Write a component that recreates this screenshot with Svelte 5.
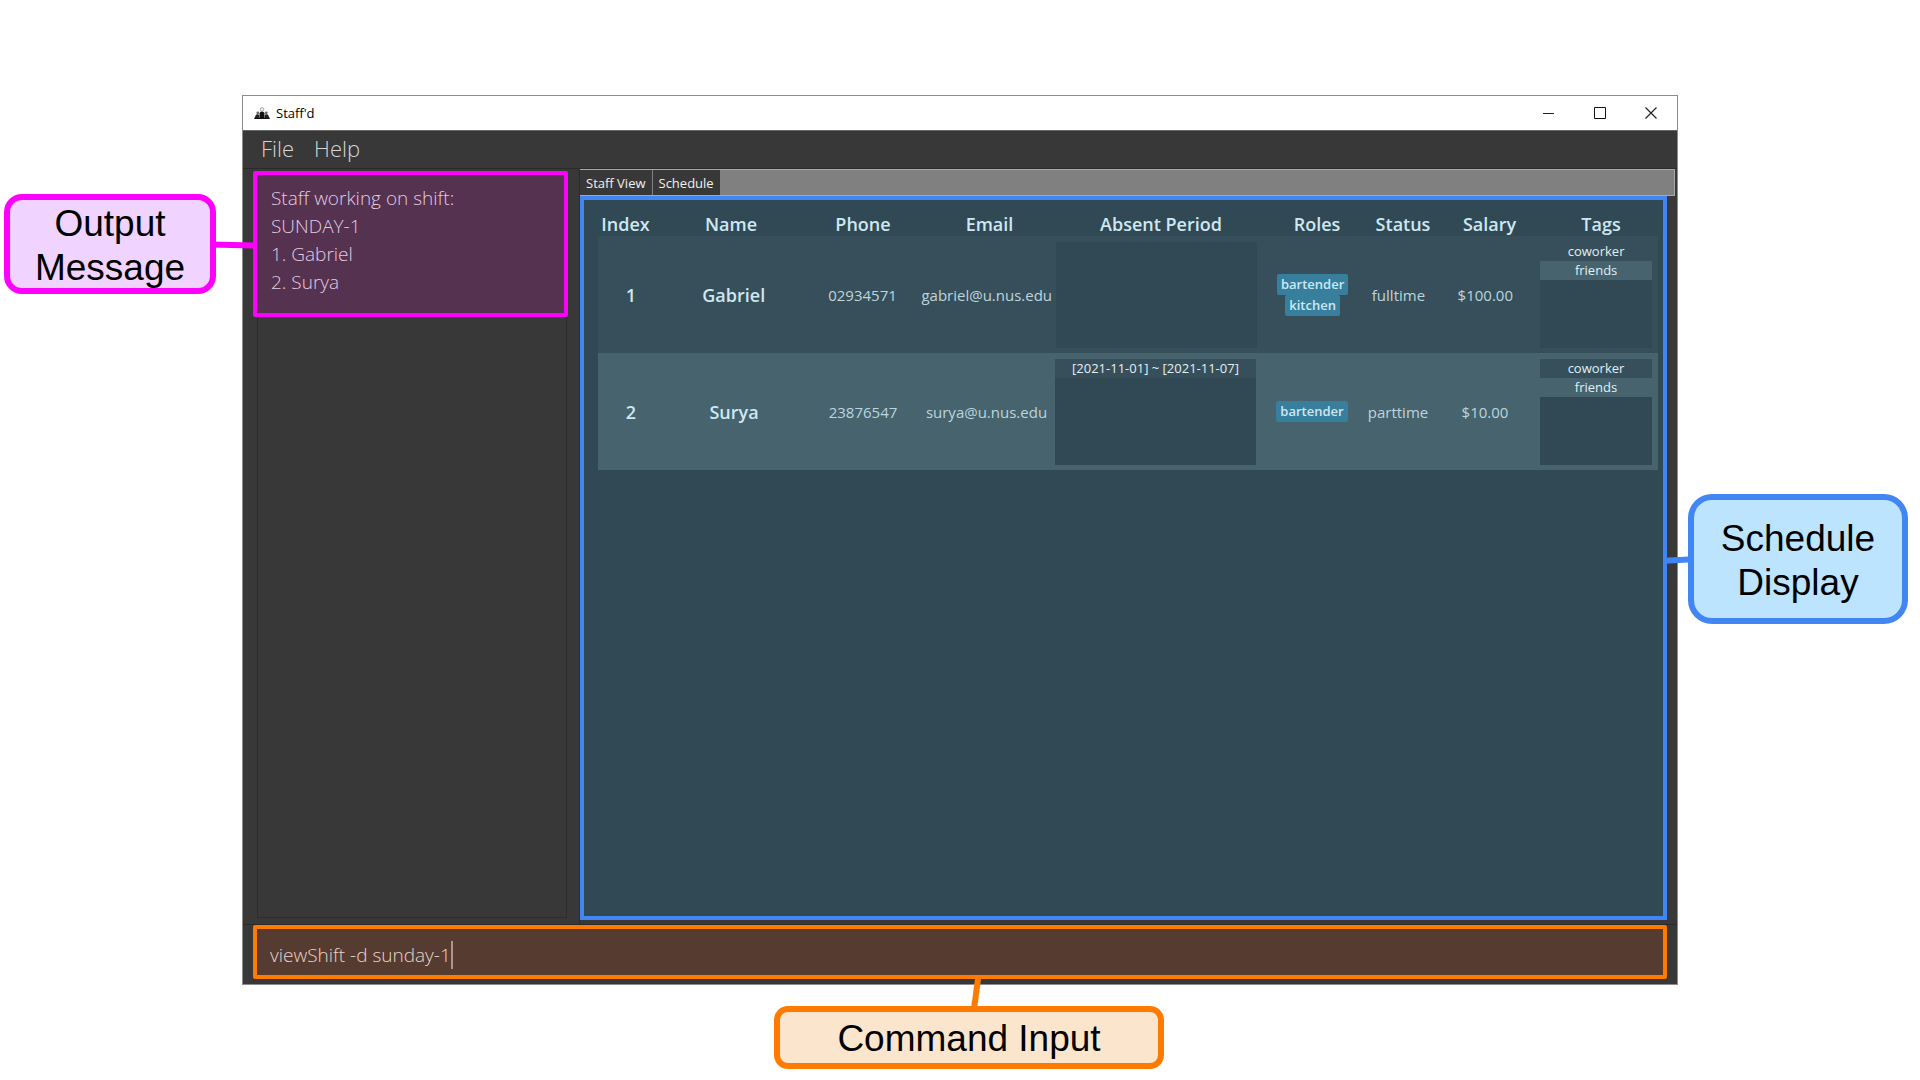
<script>
  const columns = ['Index', 'Name', 'Phone', 'Email', 'Absent Period', 'Roles', 'Status', 'Salary', 'Tags'];

  const staff = [
    {
      name: 'Gabriel',
      phone: '02934571',
      email: 'gabriel@u.nus.edu',
      absent: [],
      roles: ['bartender', 'kitchen'],
      status: 'fulltime',
      salary: '$100.00',
      tags: ['coworker', 'friends'],
    },
    {
      name: 'Surya',
      phone: '23876547',
      email: 'surya@u.nus.edu',
      absent: ['[2021-11-01] ~ [2021-11-07]'],
      roles: ['bartender'],
      status: 'parttime',
      salary: '$10.00',
      tags: ['coworker', 'friends'],
    },
  ];

  const message = ['Staff working on shift:', 'SUNDAY-1', '1. Gabriel', '2. Surya'];
  let command = $state('viewShift -d sunday-1');
</script>

<div class="page">
  <aside class="callout output-callout">
    Output Message
    <svg class="link" width="44" height="10" viewBox="0 0 44 10" aria-hidden="true">
      <path d="M0 4.5 L44 5.6" stroke="#ff00ff" stroke-width="6" />
    </svg>
  </aside>

  <main class="window">
    <header class="titlebar">
      <svg class="logo" width="16" height="13" viewBox="0 0 16 13" aria-hidden="true">
        <circle cx="8" cy="2.4" r="1.8" fill="#eee" stroke="#999" stroke-width="0.8" />
        <circle cx="3.8" cy="5.8" r="1.4" fill="#666" />
        <circle cx="12.2" cy="5.8" r="1.4" fill="#666" />
        <path d="M5.6 12 V6.2 Q5.8 4.4 8 4.4 Q10.2 4.4 10.4 6.2 V12 Z" fill="#111" />
        <path d="M0.2 12 L1.6 8.4 Q2 7.2 3.4 7.2 Q5 7.2 5.4 8.4 V12 Z" fill="#222" />
        <path d="M15.8 12 L14.4 8.4 Q14 7.2 12.6 7.2 Q11 7.2 10.6 8.4 V12 Z" fill="#222" />
        <path d="M0.6 11.4 H15.4" stroke="#111" stroke-width="1.2" />
      </svg>
      <h1>Staff'd</h1>
      <div class="controls">
        <button aria-label="Minimize">
          <svg width="12" height="12" viewBox="0 0 12 12"><path d="M0 6.5 H11" stroke="#222" /></svg>
        </button>
        <button aria-label="Maximize">
          <svg width="12" height="12" viewBox="0 0 12 12"><path d="M0.5 0.5 H11.5 V11.5 H0.5 Z" fill="none" stroke="#111" /></svg>
        </button>
        <button aria-label="Close">
          <svg width="12" height="12" viewBox="0 0 12 12"><path d="M0.5 0.5 L11.5 11.5 M11.5 0.5 L0.5 11.5" stroke="#222" stroke-width="1.2" /></svg>
        </button>
      </div>
    </header>

    <nav class="menubar">
      <button>File</button>
      <button>Help</button>
    </nav>

    <div class="body">
      <section class="side">
        <div class="message">
          {#each message as line}
            <p>{line}</p>
          {/each}
        </div>
        <div class="side-rest"></div>
      </section>

      <section class="content">
        <div class="tabs" role="tablist">
          <button role="tab" aria-selected="false">Staff View</button>
          <button role="tab" aria-selected="true">Schedule</button>
        </div>
        <div class="schedule">
          <table>
            <thead>
              <tr>
                {#each columns as column}
                  <th scope="col">{column}</th>
                {/each}
              </tr>
            </thead>
            <tbody>
              {#each staff as person, i}
                <tr>
                  <td class="strong">{i + 1}</td>
                  <td class="strong">{person.name}</td>
                  <td>{person.phone}</td>
                  <td>{person.email}</td>
                  <td class="list-cell">
                    <ul>
                      {#each person.absent as period}
                        <li>{period}</li>
                      {/each}
                    </ul>
                  </td>
                  <td class="roles">
                    {#each person.roles as role}
                      <span>{role}</span>
                    {/each}
                  </td>
                  <td>{person.status}</td>
                  <td>{person.salary}</td>
                  <td class="list-cell tags">
                    <ul>
                      {#each person.tags as tag}
                        <li>{tag}</li>
                      {/each}
                    </ul>
                  </td>
                </tr>
              {/each}
            </tbody>
          </table>
        </div>
      </section>
    </div>

    <footer class="command">
      <div class="field">
        <input type="text" aria-label="Command" bind:value={command} />
        <span class="caret"></span>
      </div>
    </footer>
  </main>

  <aside class="callout schedule-callout">
    Schedule Display
    <svg class="link" width="30" height="10" viewBox="0 0 30 10" aria-hidden="true">
      <path d="M0 5.7 L30 4.3" stroke="#4285f4" stroke-width="6" />
    </svg>
  </aside>

  <aside class="callout command-callout">
    Command Input
    <svg class="link" width="12" height="36" viewBox="0 0 12 36" aria-hidden="true">
      <path d="M8.4 0 L3.6 36" stroke="#ff7b00" stroke-width="6" />
    </svg>
  </aside>
</div>

<style>
  :global(body) {
    margin: 0;
    background: #fff;
  }

  .page {
    box-sizing: border-box;
    min-height: 100vh;
    padding: 95px 0 11px;
    display: grid;
    grid-template-columns: 242px minmax(0, 1fr) 242px;
    grid-template-rows: 1fr auto;
    font-family: 'Open Sans', 'Noto Sans', sans-serif;
  }

  button,
  input {
    font: inherit;
    color: inherit;
    background: none;
    border: 0;
    padding: 0;
    margin: 0;
  }

  /* Callouts */
  .callout {
    position: relative;
    box-sizing: border-box;
    display: flex;
    align-items: center;
    justify-content: center;
    text-align: center;
    padding-top: 3px;
    border: 6px solid;
    font: 37px/44px 'Liberation Sans', Arial, sans-serif;
  }

  .link {
    position: absolute;
  }

  .output-callout {
    align-self: start;
    margin: 99px 26px 0 4px;
    height: 100px;
    border-color: #ff00ff;
    border-radius: 18px;
    background: #f0d4ff;
  }

  .output-callout .link {
    left: 100%;
    top: 40px;
    z-index: 1;
  }

  .schedule-callout {
    align-self: start;
    margin: 399px 12px 0 10px;
    height: 130px;
    border-color: #4285f4;
    border-radius: 24px;
    background: #bce4ff;
  }

  .schedule-callout .link {
    right: 100%;
    top: 55px;
  }

  .command-callout {
    grid-column: 2;
    justify-self: center;
    width: 390px;
    height: 63px;
    margin: 21px 0 0 18px;
    border-color: #ff7b00;
    border-radius: 14px;
    background: #fce5cd;
  }

  .command-callout .link {
    left: 190px;
    bottom: 100%;
  }

  /* Application window */
  .window {
    display: flex;
    flex-direction: column;
    border: 1px solid #8c8c8c;
    background: #383838;
  }

  .titlebar {
    display: flex;
    align-items: center;
    height: 34px;
    padding-left: 11px;
    background: #fff;
    border-bottom: 1px solid #666;
  }

  h1 {
    margin: 0 auto 0 6px;
    font-size: 13px;
    font-weight: 400;
    color: #000;
  }

  .controls {
    display: flex;
    padding-right: 1px;
  }

  .controls button {
    display: flex;
    align-items: center;
    justify-content: center;
    width: 51px;
    height: 32px;
  }

  .menubar {
    display: flex;
    align-items: flex-start;
    gap: 20px;
    height: 37px;
    padding-left: 18px;
    border-bottom: 1px solid #2b2b2b;
    font-size: 22px;
    line-height: 34px;
    font-weight: 300;
    color: #d6d6d6;
  }

  .body {
    flex: 1;
    display: grid;
    grid-template-columns: 337px minmax(0, 1fr);
  }

  .side {
    display: flex;
    flex-direction: column;
    padding: 2px 11px 6px 10px;
    border-right: 1px solid #2b2b2b;
  }

  .message {
    border: 4px solid #ff00ff;
    border-radius: 2px;
    background: #543250;
    height: 138px;
    font-size: 19px;
    line-height: 28px;
    font-weight: 300;
    color: #e3cbe2;
  }

  .message p {
    margin: 0 14px;
  }

  .message p:first-child {
    margin-top: 9px;
  }

  .side-rest {
    flex: 1;
    margin: 0 1px 0 4px;
    border: 1px solid #2d2d2d;
    border-top: 0;
  }

  .content {
    display: flex;
    flex-direction: column;
    padding-bottom: 4px;
  }

  .tabs {
    display: flex;
    box-sizing: border-box;
    height: 27px;
    margin-right: 2px;
    border: 1px solid #a8a8a8;
    border-left: 0;
    background: #808080;
    font-size: 13px;
    color: #f0f0f0;
  }

  .tabs button {
    padding: 0 6px;
    background: #383838;
    border-right: 1px solid #808080;
  }

  .schedule {
    flex: 1;
    margin-right: 10px;
    border: 4px solid #4285f4;
    background: #314954;
    padding: 11px 5px 0 14px;
  }

  table {
    display: block;
    color: #bcd5de;
  }

  thead,
  tbody {
    display: block;
  }

  tr {
    display: grid;
  }

  thead tr {
    grid-template-columns: 55fr 156fr 108fr 145fr 198fr 114fr 58fr 115fr 108fr 3fr;
  }

  th {
    padding: 2px 0 0;
    font-size: 18px;
    line-height: 23px;
    font-weight: 600;
    white-space: nowrap;
    color: #cde8f2;
    text-align: center;
  }

  tbody tr {
    grid-template-columns: 66fr 140fr 118fr 129fr 209fr 104fr 68fr 106fr 120fr;
    height: 117px;
    background: #374f5a;
  }

  tbody tr:nth-child(even) {
    background: #46636e;
  }

  td {
    display: flex;
    align-items: center;
    justify-content: center;
    padding: 0;
    font-size: 15px;
  }

  td.strong {
    font-size: 18px;
    font-weight: 600;
    color: #cde8f2;
  }

  td.list-cell {
    align-items: stretch;
    padding: 6px 4px 5px;
  }

  td.tags {
    padding: 6px 6px 5px 2px;
  }

  ul {
    flex: 1;
    margin: 0;
    padding: 0;
    list-style: none;
    background: #314954;
    font-size: 13px;
    line-height: 19px;
    text-align: center;
    color: #e0f0f5;
  }

  li {
    background: #374f5a;
  }

  li:nth-child(even) {
    background: #46636e;
  }

  td.roles {
    flex-direction: column;
  }

  .roles span {
    padding: 0 4px;
    border-radius: 2px;
    background: #377f9d;
    font-size: 13px;
    line-height: 21px;
    font-weight: 600;
    color: #cde8f2;
  }

  .command {
    padding: 0 10px 5px;
    border-top: 1px solid #2b2b2b;
  }

  .field {
    box-sizing: border-box;
    display: flex;
    align-items: center;
    height: 54px;
    padding: 5px 0 0 13px;
    border: 4px solid #ff7b00;
    border-radius: 2px;
    background: #563b30;
    color: #e8d5cc;
  }

  .field input {
    field-sizing: content;
    font-size: 19px;
    font-weight: 300;
    outline: 0;
  }

  .caret {
    width: 2px;
    height: 28px;
    background: #b09488;
  }
</style>
